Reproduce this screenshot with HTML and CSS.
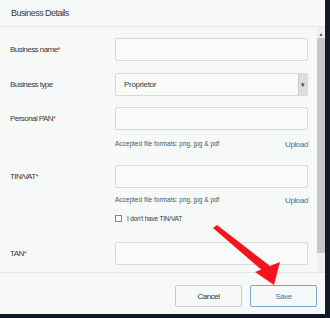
FILE: index.html
```html
<!DOCTYPE html>
<html lang="en">
<head>
  <meta charset="UTF-8">
  <title>Business Details</title>
  <link rel="stylesheet" href="styles.css">
</head>
<body>

  <div class="modal">
    <div class="modal-header">Business Details</div>

    <div class="modal-body">
      <div class="formulario">
        <div class="fila fila-nombre">
          <label>Business name<span class="req">*</span></label>
          <div class="campo"></div>
        </div>

        <div class="fila fila-tipo">
          <label>Business type</label>
          <div class="campo select">
            <span>Proprietor</span>
            <span class="select-btn">&#9662;</span>
          </div>
        </div>

        <div class="fila fila-pan">
          <label>Personal PAN<span class="req">*</span></label>
          <div class="campo"></div>
        </div>
        <div class="fila-hint hint-pan">
          <span class="hint">Accepted file formats: png, jpg &amp; pdf</span>
          <a class="upload">Upload</a>
        </div>

        <div class="fila fila-tin">
          <label>TIN/VAT<span class="req">*</span></label>
          <div class="campo"></div>
        </div>
        <div class="fila-hint hint-tin">
          <span class="hint">Accepted file formats: png, jpg &amp; pdf</span>
          <a class="upload">Upload</a>
        </div>
        <div class="fila-check">
          <span class="checkbox"></span>
          <span>I don't have TIN/VAT</span>
        </div>

        <div class="fila fila-tan">
          <label>TAN<span class="req">*</span></label>
          <div class="campo"></div>
        </div>
      </div>

      <div class="scrollbar">
        <span class="scroll-up">&#9650;</span>
        <span class="scroll-thumb"></span>
      </div>
    </div>

    <div class="modal-footer">
      <button class="btn">Cancel</button>
      <button class="btn btn-save">Save</button>
    </div>
  </div>

  <!-- flecha roja sobre el modal -->
  <svg class="flecha" width="330" height="318" viewBox="0 0 330 318">
    <polygon points="213,228 217,225 270,266 264,272" fill="#f5141b"/>
    <polygon points="255,272 280,262 274,285" fill="#f5141b"/>
  </svg>

</body>
</html>
```

FILE: styles.css
```css
body {
  margin: 0;
  padding: 0;
  background-color: #121a2a;
  font-family: "Liberation Sans", Arial, sans-serif;
  color: #3a3a3a;
  width: 330px;
  height: 318px;
  overflow: hidden;
  position: relative;
}

.modal {
  width: 325px;
  height: 314px;
  background-color: #f7f9f8;
  display: flex;
  flex-direction: column;
}

.modal-header {
  height: 26px;
  line-height: 27px;
  padding-left: 11px;
  font-size: 9px;
  letter-spacing: -0.55px;
  border-bottom: 1px solid #e2e6e4;
}

.modal-body {
  height: 245px;
  display: flex;
  border-bottom: 1px solid #e2e6e4;
}

.formulario {
  flex: 1;
  padding-left: 10px;
  padding-right: 9px;
}

.fila {
  display: grid;
  grid-template-columns: 105px 1fr;
  align-items: center;
}

.fila label {
  font-size: 8px;
  letter-spacing: -0.55px;
  line-height: 23px;
}

.req {
  color: #d23a3a;
}

.campo {
  height: 21px;
  border: 1px solid #d6dad8;
  border-radius: 2px;
  background-color: #f9fbfa;
}

.select {
  display: flex;
  align-items: center;
  justify-content: space-between;
  font-size: 8px;
  letter-spacing: -0.3px;
  padding-left: 8px;
}

.select-btn {
  width: 8px;
  height: 21px;
  line-height: 21px;
  text-align: center;
  background-color: #dcdedd;
  border-left: 1px solid #c8cbc9;
  font-size: 7px;
  color: #444;
}

.fila-nombre { margin-top: 11px; }
.fila-tipo { margin-top: 12px; }
.fila-pan { margin-top: 11px; }
.fila-tin { margin-top: 15px; }
.fila-tan { margin-top: 17px; }

.fila-hint {
  margin-left: 105px;
  display: flex;
  justify-content: space-between;
  align-items: center;
  height: 14px;
}

.hint-pan { margin-top: 6px; }
.hint-tin { margin-top: 4px; }

.hint {
  font-size: 6.5px;
  color: #555;
}

.upload {
  font-size: 8px;
  letter-spacing: -0.4px;
  color: #2f78b9;
  margin-top: 2px;
}

.fila-check {
  margin-top: 5px;
  margin-left: 105px;
  height: 14px;
  display: flex;
  align-items: center;
  gap: 5px;
  font-size: 6.5px;
  letter-spacing: -0.2px;
}

.checkbox {
  width: 5px;
  height: 5px;
  border: 1px solid #888;
  background-color: #fff;
}

.scrollbar {
  width: 8px;
  display: flex;
  flex-direction: column;
  align-items: center;
  background-color: #eef0ef;
}

.scroll-up {
  font-size: 5px;
  color: #555;
  margin-top: 4px;
  height: 7px;
}

.scroll-thumb {
  width: 8px;
  height: 215px;
  background-color: #c6c8c7;
}

.modal-footer {
  flex: 1;
  display: flex;
  justify-content: flex-end;
  align-items: flex-start;
  gap: 8px;
  padding: 12px 8px 0 0;
}

.btn {
  width: 67px;
  height: 22px;
  border: 1px solid #c9cccb;
  border-radius: 2px;
  background-color: #f7f9f8;
  font-family: inherit;
  font-size: 8px;
  letter-spacing: -0.5px;
  color: #333;
  padding: 0;
}

.btn-save {
  border-color: #7aa5cf;
  color: #3a79b7;
}

.flecha {
  position: absolute;
  left: 0;
  top: 0;
}
```
